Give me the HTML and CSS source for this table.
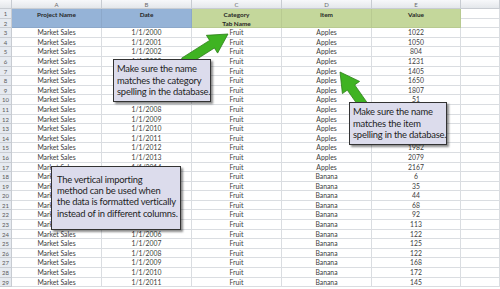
FILE: index.html
```html
<!DOCTYPE html>
<html>
<head>
<meta charset="utf-8">
<link rel="stylesheet" href="styles.css">
</head>
<body>
<div class="sheet">
  <div class="c corner"></div><div class="c hd">A</div><div class="c hd">B</div><div class="c hd">C</div><div class="c hd">D</div><div class="c hd">E</div><div class="c hd"></div>
  <div class="c rn">1</div>
  <div class="c blue">Project Name</div>
  <div class="c blue">Date</div>
  <div class="c green">Category<br>Tab Name</div>
  <div class="c green">Item</div>
  <div class="c green">Value</div>
  <div class="c"></div>
  <div class="c rn">2</div>
  <div class="c"></div>

  <div class="c rn">3</div><div class="c">Market Sales</div><div class="c">1/1/2000</div><div class="c">Fruit</div><div class="c">Apples</div><div class="c">1022</div><div class="c"></div>
  <div class="c rn">4</div><div class="c">Market Sales</div><div class="c">1/1/2001</div><div class="c">Fruit</div><div class="c">Apples</div><div class="c">1050</div><div class="c"></div>
  <div class="c rn">5</div><div class="c">Market Sales</div><div class="c">1/1/2002</div><div class="c">Fruit</div><div class="c">Apples</div><div class="c">804</div><div class="c"></div>
  <div class="c rn">6</div><div class="c">Market Sales</div><div class="c">1/1/2003</div><div class="c">Fruit</div><div class="c">Apples</div><div class="c">1231</div><div class="c"></div>
  <div class="c rn">7</div><div class="c">Market Sales</div><div class="c">1/1/2004</div><div class="c">Fruit</div><div class="c">Apples</div><div class="c">1405</div><div class="c"></div>
  <div class="c rn">8</div><div class="c">Market Sales</div><div class="c">1/1/2005</div><div class="c">Fruit</div><div class="c">Apples</div><div class="c">1650</div><div class="c"></div>
  <div class="c rn">9</div><div class="c">Market Sales</div><div class="c">1/1/2006</div><div class="c">Fruit</div><div class="c">Apples</div><div class="c">1807</div><div class="c"></div>
  <div class="c rn">10</div><div class="c">Market Sales</div><div class="c">1/1/2007</div><div class="c">Fruit</div><div class="c">Apples</div><div class="c">51</div><div class="c"></div>
  <div class="c rn">11</div><div class="c">Market Sales</div><div class="c">1/1/2008</div><div class="c">Fruit</div><div class="c">Apples</div><div class="c">1860</div><div class="c"></div>
  <div class="c rn">12</div><div class="c">Market Sales</div><div class="c">1/1/2009</div><div class="c">Fruit</div><div class="c">Apples</div><div class="c">1899</div><div class="c"></div>
  <div class="c rn">13</div><div class="c">Market Sales</div><div class="c">1/1/2010</div><div class="c">Fruit</div><div class="c">Apples</div><div class="c">1912</div><div class="c"></div>
  <div class="c rn">14</div><div class="c">Market Sales</div><div class="c">1/1/2011</div><div class="c">Fruit</div><div class="c">Apples</div><div class="c">1945</div><div class="c"></div>
  <div class="c rn">15</div><div class="c">Market Sales</div><div class="c">1/1/2012</div><div class="c">Fruit</div><div class="c">Apples</div><div class="c">1982</div><div class="c"></div>
  <div class="c rn">16</div><div class="c">Market Sales</div><div class="c">1/1/2013</div><div class="c">Fruit</div><div class="c">Apples</div><div class="c">2079</div><div class="c"></div>
  <div class="c rn">17</div><div class="c">Market Sales</div><div class="c">1/1/2014</div><div class="c">Fruit</div><div class="c">Apples</div><div class="c">2167</div><div class="c"></div>
  <div class="c rn">18</div><div class="c">Market Sales</div><div class="c">1/1/2000</div><div class="c">Fruit</div><div class="c">Banana</div><div class="c">6</div><div class="c"></div>
  <div class="c rn">19</div><div class="c">Market Sales</div><div class="c">1/1/2001</div><div class="c">Fruit</div><div class="c">Banana</div><div class="c">35</div><div class="c"></div>
  <div class="c rn">20</div><div class="c">Market Sales</div><div class="c">1/1/2002</div><div class="c">Fruit</div><div class="c">Banana</div><div class="c">44</div><div class="c"></div>
  <div class="c rn">21</div><div class="c">Market Sales</div><div class="c">1/1/2003</div><div class="c">Fruit</div><div class="c">Banana</div><div class="c">68</div><div class="c"></div>
  <div class="c rn">22</div><div class="c">Market Sales</div><div class="c">1/1/2004</div><div class="c">Fruit</div><div class="c">Banana</div><div class="c">92</div><div class="c"></div>
  <div class="c rn">23</div><div class="c">Market Sales</div><div class="c">1/1/2005</div><div class="c">Fruit</div><div class="c">Banana</div><div class="c">113</div><div class="c"></div>
  <div class="c rn">24</div><div class="c">Market Sales</div><div class="c">1/1/2006</div><div class="c">Fruit</div><div class="c">Banana</div><div class="c">122</div><div class="c"></div>
  <div class="c rn">25</div><div class="c">Market Sales</div><div class="c">1/1/2007</div><div class="c">Fruit</div><div class="c">Banana</div><div class="c">125</div><div class="c"></div>
  <div class="c rn">26</div><div class="c">Market Sales</div><div class="c">1/1/2008</div><div class="c">Fruit</div><div class="c">Banana</div><div class="c">122</div><div class="c"></div>
  <div class="c rn">27</div><div class="c">Market Sales</div><div class="c">1/1/2009</div><div class="c">Fruit</div><div class="c">Banana</div><div class="c">168</div><div class="c"></div>
  <div class="c rn">28</div><div class="c">Market Sales</div><div class="c">1/1/2010</div><div class="c">Fruit</div><div class="c">Banana</div><div class="c">172</div><div class="c"></div>
  <div class="c rn">29</div><div class="c">Market Sales</div><div class="c">1/1/2011</div><div class="c">Fruit</div><div class="c">Banana</div><div class="c">145</div><div class="c"></div>
</div>

<svg class="arrows" width="500" height="289" viewBox="0 0 500 289">
  <polygon class="arrow" points="181.6,58.2 209.6,40.4 206.4,35.3 228,34 217.6,53.1 214.4,48.0 186.4,65.8"/>
  <polygon class="arrow" points="367.7,103.4 354.7,84.9 359.6,81.4 340,72 342.4,93.6 347.3,90.1 360.3,108.6"/>
</svg>

<div class="callout c1">Make sure the name<br>matches the category<br>spelling in the database.</div>
<div class="callout c2">Make sure the name<br>matches the item<br>spelling in the database.</div>
<div class="callout c3">The vertical importing<br>method can be used when<br>the data is formatted vertically<br>instead of in different columns.</div>
</body>
</html>
```
FILE: styles.css
```css
body {
  margin: 0;
  width: 500px;
  height: 289px;
  overflow: hidden;
  background: #ffffff;
  position: relative;
  font-family: Lato, "Liberation Sans", sans-serif;
}

.sheet {
  display: grid;
  grid-template-columns: 12px 90px 90px 90px 90px 89px 39px;
  grid-template-rows: 9px repeat(29, 9.6px);
}

.c {
  box-sizing: border-box;
  border-right: 1px solid #dadde1;
  border-bottom: 1px solid #dadde1;
  font-size: 6.8px;
  line-height: 9px;
  color: #3c3c3c;
  text-align: center;
  white-space: nowrap;
  overflow: hidden;
}

.corner,
.hd {
  background: linear-gradient(#f7f8fa, #e4e7eb);
  border-color: #c8ccd2;
  color: #6a6a6a;
  font-size: 6px;
  line-height: 9px;
}

.rn {
  background: #e6eaf0;
  border-color: #c8ccd2;
  color: #5a5a5a;
  font-size: 6px;
  line-height: 9.6px;
}

.blue,
.green {
  grid-row: span 2;
  font-weight: bold;
  color: #262626;
  line-height: 9.6px;
  font-size: 6.4px;
  padding-top: 0.5px;
  border-color: rgba(0, 0, 0, 0.06);
}

.blue {
  background: #95b3d7;
}

.green {
  background: #c4d79b;
}

.arrows {
  position: absolute;
  left: 0;
  top: 0;
}

.arrow {
  fill: #3fb322;
  stroke: #2b7d17;
  stroke-width: 0.8;
  stroke-linejoin: miter;
}

.callout {
  position: absolute;
  box-sizing: border-box;
  background: #dcdcec;
  border: 1px solid #333333;
  box-shadow: 2px 2px 2px rgba(0, 0, 0, 0.45);
  font-family: Lato, "Liberation Sans", sans-serif;
  font-size: 9.4px;
  letter-spacing: -0.2px;
  line-height: 11.5px;
  color: #1e1e1e;
  white-space: nowrap;
  padding: 3px 3px;
}

.c1 {
  left: 113px;
  top: 59px;
  width: 98px;
  height: 43px;
}

.c2 {
  left: 349px;
  top: 102px;
  width: 98px;
  height: 43px;
}

.c3 {
  left: 51px;
  top: 166px;
  width: 130px;
  height: 64px;
  padding: 7px 5px;
  line-height: 11.2px;
}
```
